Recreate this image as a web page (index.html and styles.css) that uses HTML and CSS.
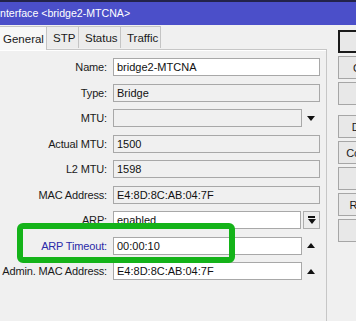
FILE: index.html
```html
<!DOCTYPE html>
<html>
<head>
<meta charset="utf-8">
<link rel="stylesheet" href="styles.css">
</head>
<body>
<div class="win">
  <div class="titlebar"><span class="title">nterface &lt;bridge2-MTCNA&gt;</span></div>
  <div class="main">
    <div class="left">
      <div class="tabs">
        <div class="tab active">General</div>
        <div class="tab">STP</div>
        <div class="tab">Status</div>
        <div class="tab">Traffic</div>
      </div>
      <div class="panel">
        <div class="form">
          <div class="row"><label>Name:</label><div class="field full edit">bridge2-MTCNA</div></div>
          <div class="row"><label>Type:</label><div class="field full">Bridge</div></div>
          <div class="row"><label>MTU:</label><div class="field narrow"></div><span class="ctrl"><span class="tri down"></span></span></div>
          <div class="row"><label>Actual MTU:</label><div class="field full">1500</div></div>
          <div class="row"><label>L2 MTU:</label><div class="field full">1598</div></div>
          <div class="row"><label>MAC Address:</label><div class="field full">E4:8D:8C:AB:04:7F</div></div>
          <div class="row"><label>ARP:</label><div class="field arp edit">enabled</div><span class="ctrl btn"><span class="bar"></span><span class="tri down sm"></span></span></div>
          <div class="row"><label class="blue">ARP Timeout:</label><div class="field narrow edit">00:00:10</div><span class="ctrl"><span class="tri up"></span></span></div>
          <div class="row"><label>Admin. MAC Address:</label><div class="field narrow edit">E4:8D:8C:AB:04:7F</div><span class="ctrl"><span class="tri up"></span></span></div>
        </div>
      </div>
    </div>
    <div class="buttons">
      <div class="button default">OK</div>
      <div class="button">Cancel</div>
      <div class="button">Apply</div>
      <div class="button sep">Disable</div>
      <div class="button">Comment</div>
      <div class="button">Copy</div>
      <div class="button">Remove</div>
      <div class="button faint">Torch</div>
    </div>
  </div>
  <div class="highlight"></div>
</div>
</body>
</html>
```
FILE: styles.css
```css
* { box-sizing: border-box; }
html, body { margin: 0; padding: 0; }
body {
  width: 356px;
  height: 321px;
  overflow: hidden;
  background: #f0f0f0;
  font-family: "Liberation Sans", Arial, sans-serif;
  font-size: 11px;
  color: #1a1a1a;
}
.win { position: relative; width: 356px; height: 321px; overflow: hidden; }
.titlebar {
  height: 25px;
  border-top: 2px solid #23234a;
  background: #4b4fc9;
  display: flex;
  align-items: center;
}
.title {
  color: #ffffff;
  font-size: 10.6px;
  padding-bottom: 1px;
}
.main {
  display: flex;
  align-items: flex-start;
}
.left {
  flex: 0 0 329px;
  margin-left: -2px;
  display: flex;
  flex-direction: column;
}
.tabs {
  display: flex;
  align-items: flex-end;
  height: 24px;
  position: relative;
  z-index: 1;
}
.tab {
  height: 22px;
  padding: 0 6px;
  border: 1px solid #c4c4c4;
  border-bottom: none;
  border-left: none;
  background: #ececec;
  display: flex;
  align-items: center;
  font-size: 11.5px;
  margin-bottom: 1px;
}
.tab.active {
  height: 24px;
  margin-bottom: -1px;
  background: #f7f7f7;
  border-left: 1px solid #c4c4c4;
  padding: 0 5px 0 4px;
  width: 49px;
}
.tab:nth-child(2) { width: 32px; }
.tab:nth-child(3) { width: 42px; }
.tab:nth-child(4) { width: 40px; }
.panel {
  border: 1px solid #c6c6c6;
  border-bottom: none;
  box-shadow: inset 1px 1px 0 #ffffff;
  height: 273px;
  padding: 8px 0 0 2px;
}
.form {
  display: flex;
  flex-direction: column;
  gap: 7.5px;
}
.row {
  display: flex;
  align-items: center;
  height: 18px;
}
.row label {
  width: 107px;
  text-align: right;
  padding-right: 1px;
  white-space: nowrap;
  letter-spacing: -0.15px;
}
.row label.blue { color: #2a2aa8; }
.field {
  margin-left: 5px;
  height: 18px;
  border: 1px solid #a8a8a8;
  background: #f0f0f0;
  padding: 0 3px;
  display: flex;
  align-items: center;
  white-space: nowrap;
  color: #111;
}
.field.edit { background: #ffffff; }
.field.full { width: 207px; }
.field.narrow { width: 189px; }
.field.arp { width: 188px; }
.ctrl {
  width: 18px;
  height: 18px;
  display: flex;
  align-items: center;
  justify-content: center;
}
.ctrl.btn {
  width: 17px;
  margin-left: 2px;
  border: 1px solid #adadad;
  background: #ececec;
  flex-direction: column;
  gap: 1px;
}
.bar { width: 7px; height: 2px; background: #111; }
.tri { width: 0; height: 0; border-left: 4px solid transparent; border-right: 4px solid transparent; }
.tri.down { border-top: 5px solid #111; }
.tri.up { border-bottom: 5px solid #111; }
.buttons {
  flex: 0 0 64px;
  margin-left: 11px;
  padding-top: 5px;
  display: flex;
  flex-direction: column;
  gap: 3px;
}
.button {
  width: 64px;
  height: 23px;
  border: 1px solid #a6a6a6;
  background: #e8e8e8;
  display: flex;
  align-items: center;
  justify-content: center;
  white-space: nowrap;
  font-size: 11px;
}
.button.default {
  border: 2px solid #1a1a1a;
}
.button.sep { margin-top: 7px; }
.button.faint { color: #d9b27a; }
.highlight {
  position: absolute;
  left: 17px;
  top: 223px;
  width: 218px;
  height: 40px;
  border: 6px solid #14b319;
  border-radius: 6px;
}
```
